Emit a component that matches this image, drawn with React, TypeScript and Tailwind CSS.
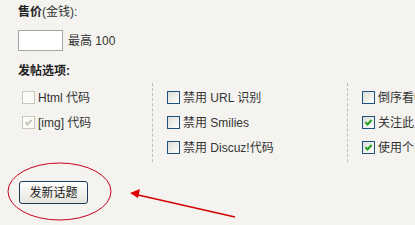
import React from 'react';

type Opt = { label: string; checked?: boolean; disabled?: boolean };

const columns: { width: string; pad: string; border: boolean; items: Opt[] }[] = [
  {
    width: 'w-[135px]',
    pad: 'pl-[4px]',
    border: true,
    items: [
      { label: 'Html 代码', disabled: true },
      { label: '[img] 代码', disabled: true, checked: true },
    ],
  },
  {
    width: 'w-[195px]',
    pad: 'pl-[14px]',
    border: true,
    items: [{ label: '禁用 URL 识别' }, { label: '禁用 Smilies' }, { label: '禁用 Discuz!代码' }],
  },
  {
    width: 'w-[120px]',
    pad: 'pl-[14px]',
    border: false,
    items: [{ label: '倒序看帖' }, { label: '关注此主题', checked: true }, { label: '使用个人签名', checked: true }],
  },
];

function Box({ checked, disabled }: { checked?: boolean; disabled?: boolean }) {
  return (
    <span
      className={
        disabled
          ? 'flex size-[13px] shrink-0 items-center justify-center border border-[#cac8bb] bg-[#fbfbf8]'
          : 'flex size-[13px] shrink-0 items-center justify-center border border-[#1c5180] bg-gradient-to-br from-[#dcdcd7] to-[#ffffff]'
      }
    >
      {checked && (
        <svg width="9" height="9" viewBox="0 0 9 9">
          <path
            d="M1.5 4.2 L3.5 6.4 L7.6 2"
            fill="none"
            stroke={disabled ? '#cac8bb' : '#21a121'}
            strokeWidth="2"
          />
        </svg>
      )}
    </span>
  );
}

export default function App() {
  return (
    <div className="relative h-[225px] w-[415px] overflow-hidden bg-[#f4f3ef] pl-[18px] pt-[3px] font-['Liberation_Sans','Noto_Sans_CJK_SC',sans-serif] text-[12px] text-[#333]">
      <div className="h-[18px] leading-[18px]">
        <b className="font-bold text-[#222]">售价</b>(金钱):
      </div>
      <div className="mt-[9px] flex items-center gap-[5px]">
        <span className="h-[21px] w-[45px] border border-[#a6a6a6] bg-white" />
        <span>最高 100</span>
      </div>
      <div className="mt-[12px] h-[16px] font-bold leading-[16px] text-[#222]">发帖选项:</div>
      <div className="mt-[4px] flex">
        {columns.map((col, i) => (
          <div
            key={i}
            className={`${col.width} ${col.pad} shrink-0 py-[2px] ${col.border ? 'border-r border-dashed border-[#bdbdbd]' : ''}`}
          >
            {col.items.map((it) => (
              <div key={it.label} className="flex h-[25px] items-center gap-[3px] whitespace-nowrap">
                <Box checked={it.checked} disabled={it.disabled} />
                <span>{it.label}</span>
              </div>
            ))}
          </div>
        ))}
      </div>
      <div className="mt-[19px] pl-[1px]">
        <button className="h-[23px] w-[69px] rounded-[3px] border border-[#1c3b5a] bg-gradient-to-b from-white to-[#e6e4dc] text-[12px] text-[#222]">
          发新话题
        </button>
      </div>
      <svg className="pointer-events-none absolute left-0 top-0" width="415" height="225">
        <ellipse cx="59.5" cy="191.5" rx="51.5" ry="28.5" fill="none" stroke="#c8001e" strokeWidth="1" />
        <line x1="235" y1="217" x2="136" y2="194.5" stroke="#d40000" strokeWidth="1.3" />
        <polygon points="130,193 140,189 138,198" fill="#e00000" />
      </svg>
    </div>
  );
}
